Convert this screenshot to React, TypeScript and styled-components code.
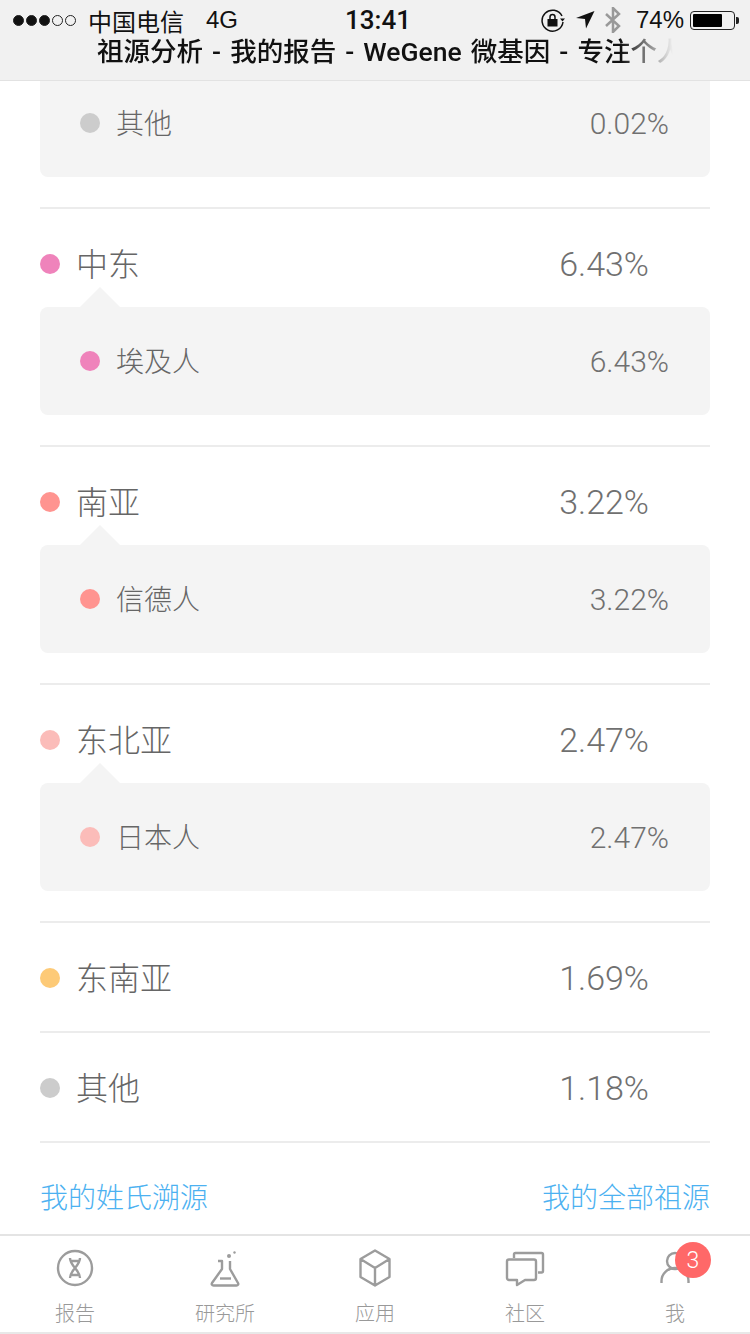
import styled, { createGlobalStyle } from "styled-components";

const GlobalStyle = createGlobalStyle`
  html, body {
    margin: 0;
    padding: 0;
    background: #fff;
  }
  body {
    font-family: Roboto, "Noto Sans CJK SC", sans-serif;
  }
`;

const Page = styled.div`
  width: 750px;
  height: 1334px;
  display: flex;
  flex-direction: column;
  overflow: hidden;
  background: #fff;
`;

const Header = styled.header`
  height: 80px;
  flex: none;
  background: #f1f1f1;
  border-bottom: 1px solid #e2e2e2;
  box-sizing: content-box;
  display: flex;
  flex-direction: column;
`;

const StatusBar = styled.div`
  height: 40px;
  padding: 0 11px 0 13px;
  box-sizing: border-box;
  display: flex;
  align-items: center;
  color: #111;
  font-family: "Liberation Sans", "Noto Sans CJK SC", sans-serif;
  font-size: 24px;
`;

const Signal = styled.div`
  display: flex;
  gap: 2px;
  margin-right: 12px;
`;

const SignalDot = styled.span<{ $on: boolean }>`
  width: 11px;
  height: 11px;
  box-sizing: border-box;
  border-radius: 50%;
  border: 1px solid #222;
  background: ${(p) => (p.$on ? "#111" : "transparent")};
`;

const Carrier = styled.span`
  width: 118px;
  white-space: nowrap;
`;

const Network = styled.span`
  width: 139px;
`;

const Clock = styled.span`
  font-family: Roboto, sans-serif;
  font-size: 26px;
  font-weight: 500;
`;

const StatusRight = styled.div`
  margin-left: auto;
  display: flex;
  align-items: center;
`;

const Battery = styled.div`
  width: 45px;
  height: 19px;
  box-sizing: border-box;
  border: 1px solid #222;
  border-radius: 4px;
  padding: 2px;
  margin-left: 6px;
`;

const BatteryFill = styled.div`
  height: 100%;
  background: #000;
  border-radius: 1px;
`;

const BatteryTip = styled.span`
  width: 3px;
  height: 7px;
  margin-left: 1px;
  background: #222;
  border-radius: 0 2px 2px 0;
`;

const BatteryText = styled.span`
  margin-left: 14px;
  font-size: 24px;
`;

const StatusIcon = styled.svg<{ $gap?: number }>`
  display: block;
  margin-left: ${(p) => p.$gap ?? 0}px;
`;

const PageTitle = styled.div`
  margin-left: 97px;
  width: 576px;
  height: 30px;
  line-height: 30px;
  margin-top: -3px;
  font-family: Roboto, "Noto Sans CJK SC", sans-serif;
  font-size: 26.5px;
  font-weight: 500;
  word-spacing: 2.5px;
  color: #111;
  white-space: nowrap;
  overflow: hidden;
  mask-image: linear-gradient(to right, #000 91%, transparent 100%);
`;

const Content = styled.main`
  flex: 1;
  padding: 0 40px;
`;

const Panel = styled.div<{ $clipped?: boolean }>`
  position: relative;
  background: #f4f4f4;
  height: ${(p) => (p.$clipped ? "96px" : "108px")};
  margin-top: ${(p) => (p.$clipped ? "0" : "-10px")};
  padding: ${(p) => (p.$clipped ? "0" : "12px")} 41px 12px 40px;
  box-sizing: border-box;
  border-radius: ${(p) => (p.$clipped ? "0 0 8px 8px" : "8px")};
  display: flex;
  align-items: center;
  ${(p) =>
    !p.$clipped &&
    `&::before {
      content: "";
      position: absolute;
      left: 40px;
      top: -20px;
      border-left: 20px solid transparent;
      border-right: 20px solid transparent;
      border-bottom: 20px solid #f4f4f4;
    }`}
`;

const Section = styled.section<{ $last?: boolean }>`
  padding-bottom: ${(p) => (p.$last ? "0" : "30px")};
  border-bottom: 2px solid #ececec;
`;

const Row = styled.div`
  height: 108px;
  padding-right: 61px;
  display: flex;
  align-items: center;
`;

const Dot = styled.span<{ $color: string }>`
  width: 20px;
  height: 20px;
  flex: none;
  border-radius: 50%;
  background: ${(p) => p.$color};
`;

const RowDot = styled(Dot)`
  margin-top: 2px;
`;

const RowName = styled.span`
  margin-left: 16px;
  margin-bottom: 2px;
  font-size: 32px;
  font-weight: 300;
  color: #666;
`;

const SubName = styled.span`
  margin-left: 16px;
  margin-bottom: 2px;
  font-size: 28px;
  font-weight: 300;
  color: #666;
`;

const RowValue = styled.span`
  margin-left: auto;
  margin-top: 2px;
  font-size: 34px;
  font-weight: 300;
  color: #707070;
`;

const SubValue = styled.span`
  margin-left: auto;
  font-size: 30px;
  font-weight: 300;
  color: #707070;
`;

const Links = styled.div`
  height: 91px;
  display: flex;
  justify-content: space-between;
  align-items: center;
  padding-top: 14px;
  box-sizing: border-box;
`;

const FooterLink = styled.a`
  font-size: 28px;
  font-weight: 300;
  color: #4cb1f1;
`;

const TabBar = styled.nav`
  flex: none;
  height: 100px;
  box-sizing: border-box;
  border-top: 2px solid #e4e4e4;
  border-bottom: 2px solid #e8e8e8;
  display: grid;
  grid-template-columns: repeat(5, 150px);
`;

const Tab = styled.div`
  position: relative;
  display: flex;
  flex-direction: column;
  align-items: center;
  padding-top: 12px;
`;

const TabIcon = styled.svg`
  width: 40px;
  height: 40px;
  fill: none;
  stroke: #9c9c9c;
  stroke-width: 2.4;
  stroke-linejoin: round;
`;

const TabLabel = styled.span`
  margin-top: 12px;
  font-size: 20px;
  line-height: 28px;
  font-weight: 300;
  color: #999;
`;

const Badge = styled.span`
  position: absolute;
  left: 75px;
  top: 6px;
  width: 36px;
  height: 36px;
  border-radius: 50%;
  background: #ff6868;
  color: #fff;
  font-size: 23px;
  font-weight: 300;
  display: flex;
  align-items: center;
  justify-content: center;
`;

type Entry = {
  name: string;
  value: string;
  color: string;
  sub?: { name: string; value: string };
};

const entries: Entry[] = [
  { name: "中东", value: "6.43%", color: "#ef83bb", sub: { name: "埃及人", value: "6.43%" } },
  { name: "南亚", value: "3.22%", color: "#ff9490", sub: { name: "信德人", value: "3.22%" } },
  { name: "东北亚", value: "2.47%", color: "#fbbcb9", sub: { name: "日本人", value: "2.47%" } },
  { name: "东南亚", value: "1.69%", color: "#fdca77" },
  { name: "其他", value: "1.18%", color: "#cccccc" },
];

const ReportIcon = () => (
  <TabIcon viewBox="0 0 40 40">
    <circle cx="20" cy="20" r="17" />
    <path d="M15 10c0 8 10 12 10 20M25 10c0 8-10 12-10 20M15.500 13h9M15.500 27h9" />
  </TabIcon>
);

const LabIcon = () => (
  <TabIcon viewBox="0 0 40 40">
    <path d="M13 13h4v8L7 35c-.7 1.300 0 2.500 1.500 2.500h23c1.500 0 2.200-1.200 1.500-2.500L25 21v-8" />
    <path d="M15 30.500h11" />
    <circle cx="24" cy="8" r="2" fill="#9c9c9c" stroke="none" />
    <circle cx="29.500" cy="4.500" r="1.200" fill="#9c9c9c" stroke="none" />
  </TabIcon>
);

const BoxIcon = () => (
  <TabIcon viewBox="0 0 40 40">
    <path d="M20 2.500L34.500 11v18L20 37.500 5.500 29V11zM5.500 11L20 20l14.500-9M20 20v17.500" />
  </TabIcon>
);

const ChatIcon = () => (
  <TabIcon viewBox="0 0 40 40">
    <path d="M9 10V6.500c0-1 .5-1.500 1.500-1.500h26c1 0 1.500.5 1.500 1.500V23c0 1-.5 1.500-1.500 1.500H33" />
    <path d="M4 11.500h25c1 0 2 1 2 2V30c0 1-1 2-2 2H20l-8 5v-5H4c-1 0-2-1-2-2V13.500c0-1 1-2 2-2z" />
  </TabIcon>
);

const MeIcon = () => (
  <TabIcon viewBox="0 0 40 40">
    <circle cx="20" cy="13" r="8" />
    <path d="M6.500 35v-2c0-7 6-13 13.500-13s13.500 6 13.500 13v2" />
  </TabIcon>
);

export default function App() {
  return (
    <Page>
      <GlobalStyle />
      <Header>
        <StatusBar>
          <Signal>
            {[true, true, true, false, false].map((on, i) => (
              <SignalDot key={i} $on={on} />
            ))}
          </Signal>
          <Carrier>中国电信</Carrier>
          <Network>4G</Network>
          <Clock>13:41</Clock>
          <StatusRight>
            <StatusIcon width="24" height="24" viewBox="0 0 24 24" fill="none" stroke="#111" strokeWidth="1.500">
              <path d="M21 8a10.500 10.500 0 1 0 1 6" />
              <path d="M19 10.500l5 0-2.500 3z" fill="#111" stroke="none" />
              <rect x="6.500" y="11" width="10" height="7.500" fill="#111" stroke="none" />
              <path d="M9 11V9a2.500 2.500 0 0 1 5 0v2" />
            </StatusIcon>
            <StatusIcon $gap={11} width="19" height="18" viewBox="0 0 19 18">
              <path d="M0 7L18.500 0 10 17.500 9 8z" fill="#111" />
            </StatusIcon>
            <StatusIcon $gap={9} width="18" height="26" viewBox="0 0 18 26" fill="none" stroke="#999" strokeWidth="2.500">
              <path d="M2 7l13 12-6 6V1l6 6L2 19" />
            </StatusIcon>
            <BatteryText>74%</BatteryText>
            <Battery>
              <BatteryFill style={{ width: "74%" }} />
            </Battery>
            <BatteryTip />
          </StatusRight>
        </StatusBar>
        <PageTitle>祖源分析 - 我的报告 - WeGene 微基因 - 专注个人</PageTitle>
      </Header>
      <Content>
        <Section>
          <Panel $clipped>
            <Dot $color="#cccccc" />
            <SubName>其他</SubName>
            <SubValue>0.02%</SubValue>
          </Panel>
        </Section>
        {entries.map((entry) => (
          <Section key={entry.name} $last={!entry.sub}>
            <Row>
              <RowDot $color={entry.color} />
              <RowName>{entry.name}</RowName>
              <RowValue>{entry.value}</RowValue>
            </Row>
            {entry.sub && (
              <Panel>
                <Dot $color={entry.color} />
                <SubName>{entry.sub.name}</SubName>
                <SubValue>{entry.sub.value}</SubValue>
              </Panel>
            )}
          </Section>
        ))}
        <Links>
          <FooterLink>我的姓氏溯源</FooterLink>
          <FooterLink>我的全部祖源</FooterLink>
        </Links>
      </Content>
      <TabBar>
        <Tab>
          <ReportIcon />
          <TabLabel>报告</TabLabel>
        </Tab>
        <Tab>
          <LabIcon />
          <TabLabel>研究所</TabLabel>
        </Tab>
        <Tab>
          <BoxIcon />
          <TabLabel>应用</TabLabel>
        </Tab>
        <Tab>
          <ChatIcon />
          <TabLabel>社区</TabLabel>
        </Tab>
        <Tab>
          <MeIcon />
          <TabLabel>我</TabLabel>
          <Badge>3</Badge>
        </Tab>
      </TabBar>
    </Page>
  );
}
